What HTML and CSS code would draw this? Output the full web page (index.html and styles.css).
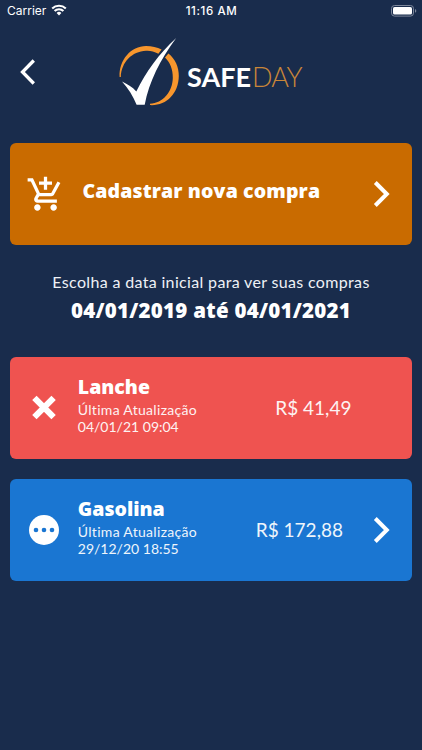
FILE: index.html
```
<!DOCTYPE html>
<html lang="pt-BR">
<head>
<meta charset="utf-8">
<title>SafeDay</title>
<link rel="stylesheet" href="styles.css">
</head>
<body>
<div class="status">
  <div class="carrier"><span>Carrier</span>
    <svg width="16" height="12" viewBox="0 0 16 12" fill="none" stroke="#fff" stroke-width="2.1"><path d="M1.2 4.6a9.7 9.7 0 0 1 13.6 0M3.6 7.1a6.2 6.2 0 0 1 8.8 0"/><path d="M8 11.4 5.6 8.9a3.5 3.5 0 0 1 4.8 0z" fill="#fff" stroke="none"/></svg>
  </div>
  <span class="time">11:16 AM</span>
  <svg class="battery" width="26" height="12" viewBox="0 0 26 12"><rect x=".5" y=".5" width="22" height="10.6" rx="3" fill="none" stroke="#7d879b"/><rect x="2" y="2" width="19" height="7.6" rx="1.6" fill="#fff"/><path d="M24 4v3.8q1.3-.7 1.3-1.9T24 4z" fill="#7d879b"/></svg>
</div>
<header class="header">
  <svg class="back" width="18" height="26" viewBox="0 0 18 26" fill="none" stroke="#fff" stroke-width="3.300"><path d="M15.800 1.500 4.500 13 15.800 24.500"/></svg>
  <svg class="logo" width="62" height="70" viewBox="118 37 62 70"><path d="M119.600 77C118.800 60 131 46 146 46C152 46 157 47.200 161.600 49.600L158.400 53.700C154 51.400 150 50.500 146 50.800C132 51.500 121.500 62 120.800 77Z" fill="#f7962d"/><path d="M168.400 53.400C175 58.500 179 67 178.800 76C178.500 94 166 106 150 105.100L150 103.800C163 103 172.500 92 172.800 78C173 69 170 62.500 165 57.500Z" fill="#f7962d"/><path d="M122 81.600C127 84.200 132.500 87 136.300 91.500C146 72 159 53.500 176.200 38C160 60 149 82 144.700 104.800H136.600C133 96 128.500 89 122 81.600Z" fill="#fff"/></svg>
  <div class="brand"><b>SAFE</b><span>DAY</span></div>
</header>
<main>
  <section class="card orange">
    <svg class="icon cart" width="39" height="39" viewBox="0 0 24 24" fill="#fff"><path d="M11 9h2V6h3V4h-3V1h-2v3H8v2h3v3zm-4 9c-1.100 0-1.990.9-1.990 2S5.900 22 7 22s2-.9 2-2-.9-2-2-2zm10 0c-1.100 0-1.990.9-1.990 2s.89 2 1.990 2 2-.9 2-2-.9-2-2-2zm-9.830-3.250.03-.12.9-1.630h7.450c.75 0 1.410-.41 1.750-1.030l3.860-7.010L19.420 4h-.01l-1.100 2-2.760 5H8.530l-.13-.27L6.160 6l-.95-2-.94-2H1v2h2l3.600 7.590-1.350 2.450c-.16.28-.25.61-.25.96 0 1.100.9 2 2 2h12v-2H7.420c-.13 0-.25-.11-.25-.25z"/></svg>
    <h2 class="action">Cadastrar nova compra</h2>
    <svg class="next" width="18" height="26" viewBox="0 0 18 26" fill="none" stroke="#fff" stroke-width="4"><path d="M2.300 1.500 13.800 13 2.300 24.500"/></svg>
  </section>
  <section class="period">
    <p>Escolha a data inicial para ver suas compras</p>
    <strong>04/01/2019 até 04/01/2021</strong>
  </section>
  <section class="card red">
    <svg class="icon" width="30" height="30" viewBox="0 0 30 30" fill="none" stroke="#fff" stroke-width="6.200"><path d="M5.400 4.900 24.600 24.100M24.600 4.900 5.400 24.100"/></svg>
    <div class="info"><h2 class="lanche">Lanche</h2><p>Última Atualização</p><p class="date">04/01/21 09:04</p></div>
    <span class="price p1">R$ 41,49</span>
  </section>
  <section class="card blue">
    <svg class="icon" width="30" height="30" viewBox="0 0 30 30"><circle cx="15" cy="15" r="15" fill="#fff"/><g fill="#1a76d2"><circle cx="7" cy="15" r="2.300"/><circle cx="15" cy="15" r="2.300"/><circle cx="23" cy="15" r="2.300"/></g></svg>
    <div class="info"><h2 class="gasolina">Gasolina</h2><p>Última Atualização</p><p class="date">29/12/20 18:55</p></div>
    <span class="price p2">R$ 172,88</span>
    <svg class="next" width="18" height="26" viewBox="0 0 18 26" fill="none" stroke="#fff" stroke-width="4"><path d="M2.300 1.500 13.800 13 2.300 24.500"/></svg>
  </section>
</main>
</body>
</html>
```
FILE: styles.css
```
* { box-sizing: border-box; margin: 0; }
body { width: 422px; height: 750px; overflow: hidden; background: #192c4c; color: #fff; font-family: Lato, sans-serif; white-space: nowrap; }
svg { display: block; flex: none; }
.status { height: 22px; display: grid; grid-template-columns: 1fr auto 1fr; align-items: center; padding: 0 5px 0 7px; font: 12px/22px Inter, sans-serif; }
.carrier { display: flex; align-items: center; gap: 5px; }
.carrier svg { margin-top: -2px; }
.time { font-weight: 500; font-size: 11.500px; letter-spacing: .6px; margin-left: -1px; }
.battery { justify-self: end; margin-top: -1px; }
.header { height: 121px; display: flex; align-items: flex-start; padding-left: 18px; }
.back { margin-top: 37px; }
.logo { margin: 15px 0 0 82px; }
.brand { margin: 39px 0 0 7px; display: flex; font-size: 27px; line-height: 32px; }
.brand b { width: 65px; font-weight: 700; }
.brand span { font-weight: 300; color: #c98639; letter-spacing: -.8px; }
main { padding: 0 10.300px; }
.card { height: 102px; border-radius: 6px; display: flex; align-items: center; padding-left: 18.500px; }
.orange { background: #c96b00; padding-left: 15.700px; }
.red { background: #ef5350; }
.blue { background: #1a76d2; margin-top: 20px; }
h2, strong { font-family: "Open Sans", sans-serif; }
h2 { font-size: 19.500px; line-height: 27px; font-weight: 800; }
.action { margin: -8px 0 0 17.500px; letter-spacing: .13px; }
.next { margin-left: auto; margin-right: 21px; }
.period { height: 112px; padding-top: 26px; text-align: center; }
.period p { font-size: 16px; line-height: 22px; letter-spacing: .34px; color: #eef1f6; }
.period strong { display: block; margin-top: 3px; font-size: 20.500px; line-height: 28px; font-weight: 800; letter-spacing: .25px; }
.info { width: 150px; margin-left: 19px; margin-top: -7px; }
.info h2 { margin-top: -1px; margin-bottom: 1px; }
.info p { font-size: 14px; line-height: 17px; letter-spacing: .3px; opacity: .93; }
.info .date { letter-spacing: 0; }
.price { font-size: 19px; line-height: 26px; opacity: .93; }
.p1 { margin-left: 47.500px; }
.p2 { margin-left: 28px; }
```
